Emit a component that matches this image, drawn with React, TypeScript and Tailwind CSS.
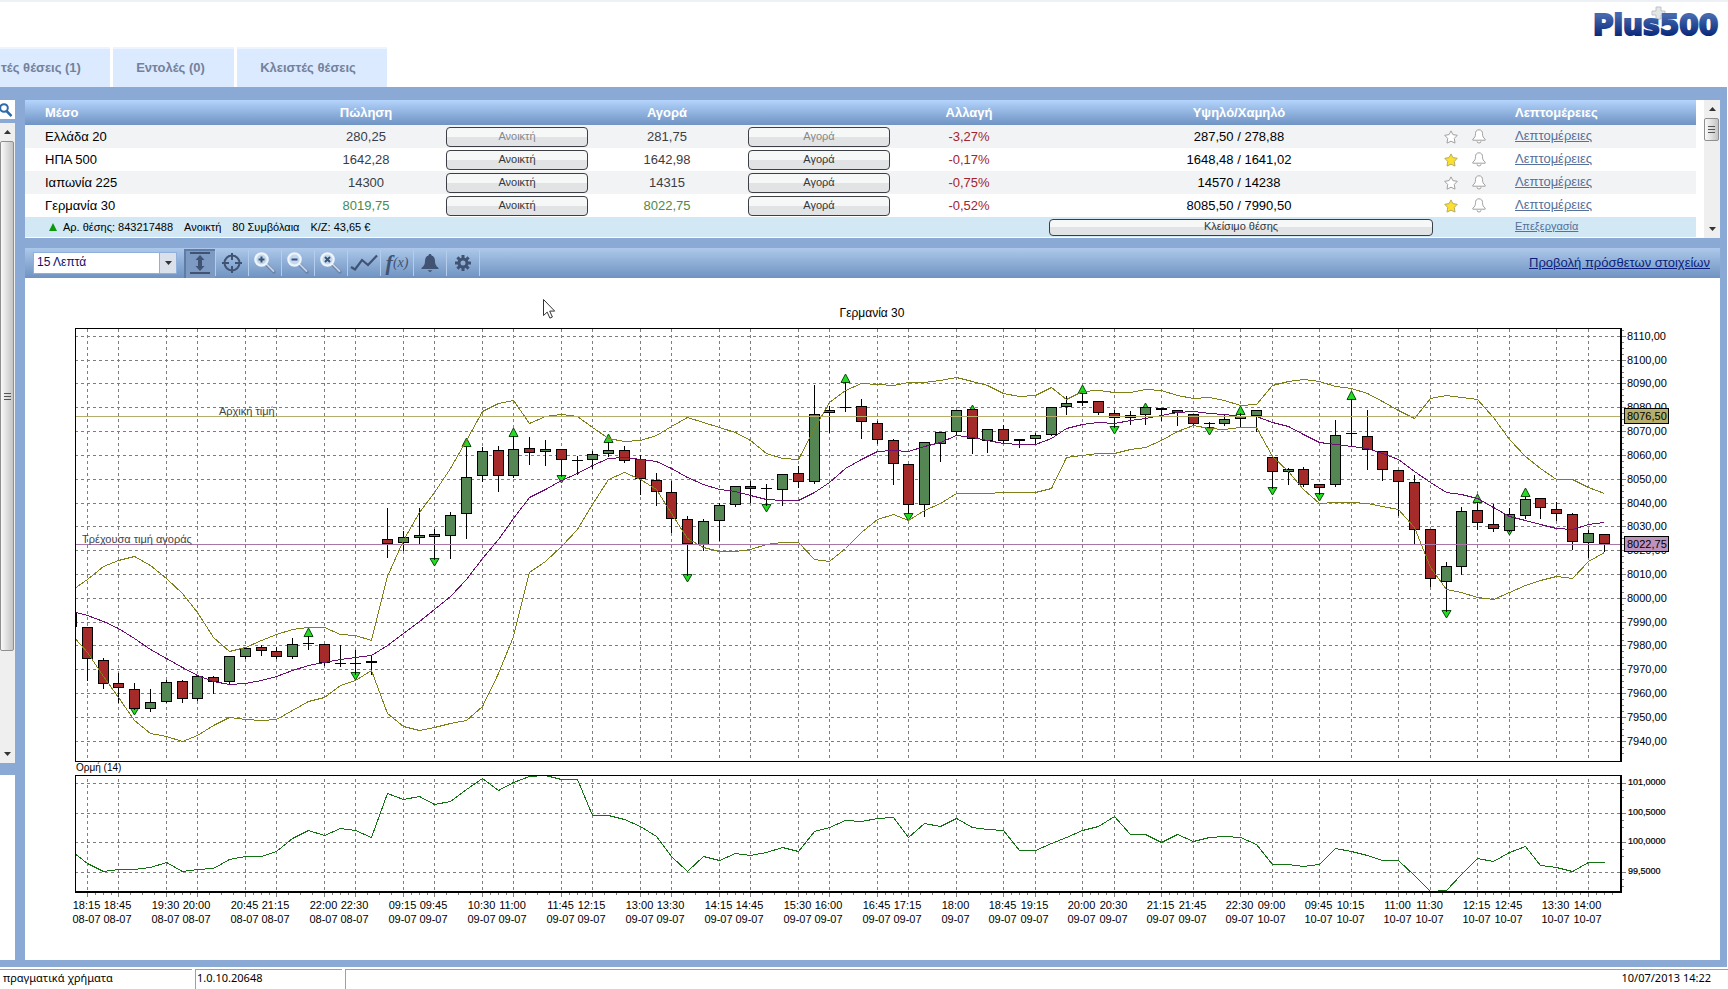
import { useState } from 'react';
import type { ReactNode } from 'react';
import { clsx } from 'clsx';

type Instrument = {
  name: string;
  sell: string;
  buy: string;
  change: string;
  range: string;
  starred?: boolean;
  closed?: boolean;
  up?: boolean;
};

const INSTRUMENTS: Instrument[] = [
  { name: 'Ελλάδα 20', sell: '280,25', buy: '281,75', change: '-3,27%', range: '287,50 / 278,88', closed: true },
  { name: 'ΗΠΑ 500', sell: '1642,28', buy: '1642,98', change: '-0,17%', range: '1648,48 / 1641,02', starred: true },
  { name: 'Ιαπωνία 225', sell: '14300', buy: '14315', change: '-0,75%', range: '14570 / 14238' },
  { name: 'Γερμανία 30', sell: '8019,75', buy: '8022,75', change: '-0,52%', range: '8085,50 / 7990,50', starred: true, up: true },
];

// direction, body top, body bottom, high, low ('d' = doji, 'b' = thick doji)
type Candle = ['r' | 'g' | 'd' | 'b', number, number, number, number];

const CANDLES: Candle[] = [
  ['r', 627, 658, 627, 680], ['r', 660, 683, 658, 688], ['r', 683, 687, 673, 702], ['r', 689, 708, 683, 709],
  ['g', 702, 708, 689, 711], ['g', 682, 701, 680, 702], ['r', 681, 698, 680, 702], ['g', 676, 698, 676, 700],
  ['r', 677, 681, 676, 693], ['g', 656, 681, 656, 684], ['g', 648, 656, 647, 658], ['r', 647, 650, 645, 655],
  ['r', 651, 656, 647, 658], ['g', 644, 656, 638, 658], ['d', 643, 643, 636, 649], ['r', 644, 662, 644, 665],
  ['d', 663, 663, 645, 666], ['d', 663, 663, 650, 674], ['b', 661, 662, 656, 674], ['r', 539, 543, 508, 557],
  ['g', 537, 542, 531, 550], ['g', 535, 537, 508, 544], ['g', 534, 536, 529, 559], ['g', 515, 535, 512, 558],
  ['g', 477, 513, 447, 538], ['g', 451, 475, 447, 481], ['r', 450, 475, 446, 491], ['g', 449, 475, 436, 477],
  ['r', 448, 452, 437, 464], ['g', 449, 451, 440, 465], ['r', 449, 459, 449, 476], ['d', 460, 460, 456, 474],
  ['g', 454, 459, 451, 468], ['g', 450, 453, 442, 456], ['r', 450, 460, 446, 462], ['r', 459, 478, 455, 494],
  ['r', 480, 491, 473, 505], ['r', 492, 518, 481, 532], ['r', 519, 543, 516, 575], ['g', 521, 544, 519, 550],
  ['g', 505, 520, 503, 540], ['g', 486, 504, 486, 506], ['r', 486, 488, 481, 502], ['d', 488, 488, 484, 505],
  ['g', 474, 489, 474, 505], ['r', 473, 481, 466, 487], ['g', 414, 481, 385, 483], ['g', 410, 412, 406, 432],
  ['d', 407, 407, 382, 411], ['r', 406, 421, 399, 438], ['r', 423, 439, 421, 443], ['r', 440, 463, 439, 484],
  ['r', 464, 504, 464, 513], ['g', 442, 504, 442, 516], ['g', 432, 443, 432, 461], ['g', 410, 431, 410, 435],
  ['r', 409, 438, 409, 453], ['g', 429, 440, 429, 452], ['r', 429, 440, 425, 443], ['b', 439, 440, 439, 447],
  ['g', 435, 438, 433, 443], ['g', 407, 434, 407, 435], ['g', 403, 406, 396, 414], ['b', 401, 402, 393, 405],
  ['r', 401, 412, 401, 414], ['r', 413, 417, 410, 427], ['g', 415, 417, 411, 424], ['g', 407, 414, 407, 424],
  ['b', 408, 409, 408, 420], ['r', 410, 412, 410, 425], ['r', 414, 423, 414, 424], ['d', 423, 423, 422, 427],
  ['g', 419, 423, 414, 425], ['g', 416, 418, 413, 427], ['g', 410, 415, 410, 431], ['r', 457, 471, 457, 488],
  ['g', 469, 471, 468, 484], ['r', 469, 484, 467, 486], ['r', 484, 487, 484, 494], ['g', 435, 484, 420, 486],
  ['d', 433, 433, 399, 446], ['r', 436, 449, 410, 469], ['r', 451, 469, 451, 480], ['r', 470, 481, 470, 515],
  ['r', 482, 529, 475, 544], ['r', 529, 578, 529, 586], ['g', 566, 581, 562, 611], ['g', 511, 566, 507, 574],
  ['r', 510, 522, 502, 529], ['r', 524, 528, 504, 531], ['g', 514, 530, 508, 531], ['g', 499, 515, 497, 518],
  ['r', 498, 507, 498, 518], ['r', 509, 513, 502, 520], ['r', 514, 541, 513, 549], ['g', 533, 542, 530, 557],
  ['r', 534, 543, 534, 551],
];

// fractal markers: candle index, y of the tip
const UP_MARKS = [[14, 628], [24, 438], [27, 428], [33, 434], [48, 374], [56, 405], [63, 385], [67, 403], [73, 406], [80, 391], [88, 494], [91, 488]];
const DOWN_MARKS = [[3, 715], [17, 680], [22, 566], [30, 483], [38, 582], [43, 512], [52, 521], [65, 434], [71, 435], [75, 495], [78, 501], [86, 618], [90, 535]];

// the first value of each series lies on the left frame, the rest on candles 0..96
const UPPER = [
  587, 579, 566, 560, 556, 565, 578, 593, 612, 637, 651, 647, 640, 634, 629, 627, 627, 634, 635, 640, 576, 540, 512, 492, 468,
  440, 411, 403, 400, 423, 416, 414, 416, 427, 438, 441, 440, 435, 426, 417, 422, 427, 432, 440, 453, 458, 459, 428, 402, 390,
  383, 384, 385, 382, 382, 380, 377, 381, 385, 393, 396, 395, 387, 399, 391, 390, 392, 392, 389, 390, 395, 398, 397, 400, 405,
  404, 385, 381, 379, 381, 386, 388, 393, 401, 410, 418, 398, 395, 397, 399, 417, 439, 456, 468, 479, 479, 487, 493,
];
const MIDDLE = [
  612, 615, 621, 628, 638, 649, 658, 667, 675, 681, 684, 683, 680, 676, 670, 665, 662, 659, 657, 655, 645, 633, 621, 609, 596,
  579, 558, 539, 518, 497, 489, 480, 473, 465, 458, 457, 459, 461, 468, 477, 484, 489, 491, 495, 499, 500, 500, 492, 482, 468,
  459, 451, 450, 451, 446, 442, 435, 437, 440, 443, 444, 444, 438, 428, 424, 422, 423, 420, 418, 415, 412, 411, 413, 414, 416,
  416, 422, 426, 434, 442, 444, 446, 448, 453, 459, 471, 482, 492, 494, 498, 507, 516, 520, 524, 528, 529, 524, 522,
];
const LOWER = [
  639, 652, 676, 697, 720, 733, 736, 741, 735, 725, 717, 719, 720, 719, 710, 701, 697, 685, 680, 670, 713, 726, 730, 727, 723,
  720, 706, 673, 636, 572, 561, 546, 529, 504, 479, 472, 479, 489, 513, 538, 547, 551, 551, 549, 544, 542, 542, 559, 561, 548,
  532, 519, 514, 520, 510, 503, 493, 493, 493, 492, 492, 492, 488, 457, 455, 453, 453, 449, 447, 440, 431, 425, 428, 429, 427,
  427, 456, 471, 489, 503, 502, 502, 503, 506, 509, 527, 567, 589, 592, 597, 599, 592, 585, 580, 576, 578, 561, 552,
];
const MOMENTUM = [
  854, 863, 871, 869, 869, 867, 862, 871, 869, 868, 859, 856, 856, 851, 838, 830, 835, 828, 830, 837, 793, 799, 796, 804, 801,
  789, 778, 790, 782, 776, 775, 779, 779, 815, 815, 819, 826, 836, 856, 871, 856, 860, 853, 855, 852, 847, 851, 831, 827, 820,
  821, 818, 817, 837, 823, 826, 818, 827, 829, 830, 850, 850, 843, 837, 830, 826, 816, 834, 834, 842, 834, 841, 837, 836, 837,
  844, 864, 864, 866, 864, 848, 851, 855, 860, 860, 875, 891, 890, 874, 858, 861, 852, 846, 865, 867, 871, 862, 862,
];

const TIMES: [number, string, string][] = [
  [0, '18:15', '08-07'], [2, '18:45', '08-07'], [5, '19:30', '08-07'], [7, '20:00', '08-07'], [10, '20:45', '08-07'],
  [12, '21:15', '08-07'], [15, '22:00', '08-07'], [17, '22:30', '08-07'], [20, '09:15', '09-07'], [22, '09:45', '09-07'],
  [25, '10:30', '09-07'], [27, '11:00', '09-07'], [30, '11:45', '09-07'], [32, '12:15', '09-07'], [35, '13:00', '09-07'],
  [37, '13:30', '09-07'], [40, '14:15', '09-07'], [42, '14:45', '09-07'], [45, '15:30', '09-07'], [47, '16:00', '09-07'],
  [50, '16:45', '09-07'], [52, '17:15', '09-07'], [55, '18:00', '09-07'], [58, '18:45', '09-07'], [60, '19:15', '09-07'],
  [63, '20:00', '09-07'], [65, '20:30', '09-07'], [68, '21:15', '09-07'], [70, '21:45', '09-07'], [73, '22:30', '09-07'],
  [75, '09:00', '10-07'], [78, '09:45', '10-07'], [80, '10:15', '10-07'], [83, '11:00', '10-07'], [85, '11:30', '10-07'],
  [88, '12:15', '10-07'], [90, '12:45', '10-07'], [93, '13:30', '10-07'], [95, '14:00', '10-07'],
];

const MOMENTUM_LEVELS: [string, number][] = [['101,0000', 783], ['100,5000', 813], ['100,0000', 842], ['99,5000', 872]];

const LEFT = 75;
const RIGHT = 1621;
const STEP = 15.8;
const candleX = (i: number) => Math.floor(87.3 + i * STEP) + 0.5;
const priceY = (v: number) => Math.floor(336.3 + (8110 - v) * 2.382) + 0.5;
const toPoints = (ys: number[]) => ys.map((y, i) => `${i === 0 ? LEFT + 1 : candleX(i - 1)},${y + 0.5}`).join(' ');

function CandleShape({ candle, x }: { candle: Candle; x: number }) {
  const [kind, top, bottom, high, low] = candle;
  return (
    <g stroke="#000">
      <line x1={x} x2={x} y1={high} y2={low + 1} />
      {kind === 'd' || kind === 'b' ? (
        <line x1={x - 5.5} x2={x + 5.5} y1={kind === 'd' ? top + 0.5 : top + 1} y2={kind === 'd' ? top + 0.5 : top + 1} strokeWidth={kind === 'd' ? 1 : 2} />
      ) : (
        <rect x={x - 5} y={top + 0.5} width={10} height={bottom - top} fill={kind === 'r' ? '#a52a2a' : '#548654'} />
      )}
    </g>
  );
}

function PriceChart() {
  const prices = Array.from({ length: 18 }, (_, i) => 8110 - i * 10);
  const minorPrices = Array.from({ length: 72 }, (_, i) => 8112.5 - i * 2.5);
  const minorTimes = TIMES.flatMap(([i], n) => {
    const next = n + 1 < TIMES.length ? TIMES[n + 1][0] : i + 2;
    return [0.25, 0.5, 0.75].map((f) => i + (next - i) * f);
  });

  return (
    <svg viewBox="25 278 1695 682" className="block w-full font-['Liberation_Sans',Arial,sans-serif] text-[11px]" role="img" aria-label="Γερμανία 30">
      <text x={872} y={317} textAnchor="middle" className="text-[12px]">Γερμανία 30</text>

      <g shapeRendering="crispEdges" fill="none">
        <g stroke="#7d7d7d" strokeDasharray="3 3">
          {prices.map((p) => <line key={p} x1={LEFT} x2={RIGHT} y1={priceY(p)} y2={priceY(p)} />)}
          {MOMENTUM_LEVELS.map(([label, y]) => <line key={label} x1={LEFT} x2={RIGHT} y1={y + 0.5} y2={y + 0.5} />)}
          {TIMES.map(([i]) => <path key={i} d={`M${candleX(i)} 329V761M${candleX(i)} 779V892`} />)}
        </g>
        <g stroke="#808080">
          {prices.map((p) => <line key={p} x1={RIGHT} x2={RIGHT + 5} y1={priceY(p)} y2={priceY(p)} />)}
          {minorPrices.map((p) => <line key={p} x1={RIGHT} x2={RIGHT + 3} y1={priceY(p)} y2={priceY(p)} />)}
          {MOMENTUM_LEVELS.map(([label, y]) => (
            <path key={label} d={`M${RIGHT} ${y + 0.5}h5M${RIGHT} ${y + 7.5}h3M${RIGHT} ${y + 14.5}h3`} />
          ))}
          {TIMES.map(([i]) => <line key={i} x1={candleX(i)} x2={candleX(i)} y1={892} y2={897} />)}
          {minorTimes.map((i) => <line key={i} x1={candleX(i)} x2={candleX(i)} y1={892} y2={895} />)}
        </g>

        {UP_MARKS.map(([i, y]) => (
          <path key={i} d={`M${candleX(i)} ${y}l4.5 8.5h-9z`} fill="#22dd22" stroke="#0a4a0a" shapeRendering="auto" />
        ))}
        {DOWN_MARKS.map(([i, y]) => (
          <path key={i} d={`M${candleX(i)} ${y}l4.5 -7.5h-9z`} fill="#22dd22" stroke="#0a4a0a" shapeRendering="auto" />
        ))}

        <rect x={75} y={612} width={2} height={15} fill="#000" />
        {CANDLES.map((c, i) => <CandleShape key={i} candle={c} x={candleX(i)} />)}

        <polyline points={toPoints(UPPER)} stroke="#80801a" />
        <polyline points={toPoints(LOWER)} stroke="#80801a" />
        <polyline points={toPoints(MIDDLE)} stroke="#6b0f72" />
        <polyline points={toPoints(MOMENTUM)} stroke="#147214" />

        <line x1={LEFT} x2={RIGHT} y1={416.5} y2={416.5} stroke="#b5ad6b" />
        <line x1={LEFT} x2={RIGHT} y1={544.5} y2={544.5} stroke="#a877a8" />

        <g stroke="#000">
          <path d={`M75.5 761.5V328.5H${RIGHT}M75 761.5H${RIGHT}`} />
          <path d={`M${RIGHT} 328V762`} strokeWidth={2} />
          <path d={`M75.5 892V775.5H${RIGHT}`} />
          <path d={`M75 892H${RIGHT}V775`} strokeWidth={2} />
        </g>
      </g>

      <text x={219} y={415} fill="#444">Αρχική τιμή</text>
      <text x={82} y={543} fill="#444">Τρέχουσα τιμή αγοράς</text>
      <text x={76} y={771} className="text-[10px]">Ορμή (14)</text>

      {prices.map((p) => <text key={p} x={1627} y={priceY(p) + 3}>{`${p},00`}</text>)}
      {MOMENTUM_LEVELS.map(([label, y]) => <text key={label} x={1628} y={y + 2} className="text-[9px]" stroke="#000" strokeWidth={0.2}>{label}</text>)}

      <g shapeRendering="crispEdges" stroke="#000">
        <rect x={1624.5} y={408.5} width={44} height={15} fill="#b5ad6b" />
        <rect x={1624.5} y={536.5} width={44} height={15} fill="#bc93bc" />
      </g>
      <text x={1627} y={420}>8076,50</text>
      <text x={1627} y={548}>8022,75</text>

      {TIMES.map(([i, time, date]) => (
        <g key={i} textAnchor="middle">
          <text x={candleX(i) - 1} y={909}>{time}</text>
          <text x={candleX(i) - 1} y={923}>{date}</text>
        </g>
      ))}

      <path d="M543.5 299.5v16l3.7-3.4 2.7 6 2.5-1.1-2.7-5.9h5z" fill="#fff" stroke="#333" />
    </svg>
  );
}

function Star({ on }: { on?: boolean }) {
  return (
    <svg width="14" height="14" viewBox="0 0 14 14" aria-hidden="true">
      <path d="M7 .9l1.900 3.700 4.400.7-3 3.100.7 4.700L7 11.200l-4 1.900.7-4.700-3-3.100 4.400-.7z" fill={on ? '#fbe02f' : '#fff'} stroke={on ? '#b9ab6a' : '#a0a0a0'} strokeLinejoin="round" />
    </svg>
  );
}

function AlertBell() {
  return (
    <svg width="14" height="15" viewBox="0 0 14 15" aria-hidden="true">
      <path d="M5 12.200a2 1.800 0 0 0 4 0" fill="#fff" stroke="#a0a0a0" />
      <path d="M7 .8c2.400 0 3.500 1.600 3.500 3.800 0 2.800.7 4 2.700 5.600v1H.8v-1c2-1.600 2.700-2.800 2.700-5.600C3.500 2.400 4.600.8 7 .8z" fill="#fff" stroke="#a0a0a0" />
    </svg>
  );
}

function TradeButton({ children, disabled, className }: { children: ReactNode; disabled?: boolean; className?: string }) {
  return (
    <button
      disabled={disabled}
      className={clsx(
        'block rounded-[4px] border border-[#3c3f46] bg-linear-to-b from-[#f6f7f7] from-50% to-[#e2e3e4] to-50% pb-px text-[11px] leading-none text-[#33363c] disabled:text-[#85878b]',
        className ?? 'mx-auto h-[20px] w-[142px]',
      )}
    >
      {children}
    </button>
  );
}

function Triangle({ down }: { down?: boolean }) {
  return (
    <svg width="7" height="4" viewBox="0 0 7 4" aria-hidden="true">
      <path d={down ? 'M0 0h7L3.500 4z' : 'M0 4h7L3.500 0z'} fill="#333" />
    </svg>
  );
}

function ScrollBar({ label, thumb, className }: { label: string; thumb: string; className?: string }) {
  return (
    <div className={clsx('flex flex-col bg-[#efefef]', className)}>
      <button aria-label={`${label} επάνω`} className="flex h-[18px] shrink-0 items-center justify-center"><Triangle /></button>
      <div className={clsx('mr-px flex flex-col items-center justify-center gap-[2px] rounded-[2px] border border-[#8f8f8f] bg-linear-to-r from-[#fafafa] to-[#c4c4c4]', thumb)}>
        <span className="h-px w-[7px] bg-[#555]" />
        <span className="h-px w-[7px] bg-[#555]" />
        <span className="h-px w-[7px] bg-[#555]" />
      </div>
      <button aria-label={`${label} κάτω`} className="mt-auto flex h-[18px] shrink-0 items-center justify-center"><Triangle down /></button>
    </div>
  );
}

function InstrumentTable() {
  return (
    <table className="w-full table-fixed border-collapse text-[13px]">
      <colgroup>
        <col className="w-[270px]" />
        <col className="w-[142px]" />
        <col className="w-[160px]" />
        <col className="w-[140px]" />
        <col className="w-[164px]" />
        <col className="w-[136px]" />
        <col className="w-[404px]" />
        <col className="w-[64px]" />
        <col className="w-[191px]" />
      </colgroup>
      <thead>
        <tr className="h-[25px] bg-linear-to-b from-[#b4d4fc] to-[#6f93c3] text-white">
          <th className="pl-[20px] text-left">Μέσο</th>
          <th>Πώληση</th>
          <th />
          <th>Αγορά</th>
          <th />
          <th>Αλλαγή</th>
          <th>Υψηλό/Χαμηλό</th>
          <th />
          <th className="pl-[10px] text-left">Λεπτομέρειες</th>
        </tr>
      </thead>
      <tbody>
        {INSTRUMENTS.map((row) => (
          <tr key={row.name} className="h-[23px] text-center odd:bg-[#f1f3f5] [&>td]:p-0">
            <td className="text-left"><span className="pl-[20px]">{row.name}</span></td>
            <td className={row.up ? 'text-[#4c8a4c]' : 'text-[#3a3d45]'}>{row.sell}</td>
            <td><TradeButton disabled={row.closed}>Ανοικτή</TradeButton></td>
            <td className={row.up ? 'text-[#4c8a4c]' : 'text-[#3a3d45]'}>{row.buy}</td>
            <td><TradeButton disabled={row.closed}>Αγορά</TradeButton></td>
            <td className="text-[#a3242c]">{row.change}</td>
            <td>{row.range}</td>
            <td>
              <div className="flex gap-[14px] pl-[3px]">
                <button aria-label={`Αγαπημένο ${row.name}`}><Star on={row.starred} /></button>
                <button aria-label={`Ειδοποίηση ${row.name}`}><AlertBell /></button>
              </div>
            </td>
            <td className="text-left"><a href="#details" className="block pb-[2px] pl-[10px] leading-[18px] text-[#55709a] underline">Λεπτομέρειες</a></td>
          </tr>
        ))}
        <tr className="h-[20px] bg-[#d3e8f5] text-[11px] [&>td]:p-0">
          <td colSpan={6}>
            <div className="flex items-center pl-[24px]">
              <svg width="8" height="8" viewBox="0 0 8 8" aria-hidden="true"><path d="M4 0l4 8H0z" fill="#0a9a0a" /></svg>
              <span className="ml-[6px]">Αρ. θέσης: 843217488</span>
              <span className="ml-[11px]">Ανοικτή</span>
              <span className="ml-[11px]">80 Συμβόλαια</span>
              <span className="ml-[11px]">Κ/Ζ: 43,65 €</span>
            </div>
          </td>
          <td><div className="pr-[8px] pl-[12px]"><TradeButton className="h-[17px] w-full">Κλείσιμο θέσης</TradeButton></div></td>
          <td />
          <td><a href="#edit" className="block pb-[2px] pl-[10px] text-[#55709a] underline">Επεξεργασία</a></td>
        </tr>
      </tbody>
    </table>
  );
}

function ZoomGlass({ sign }: { sign: string }) {
  return (
    <svg width="24" height="24" viewBox="0 0 24 24" fill="none" aria-hidden="true">
      <path d="M13.500 13.500l7.500 7.500" stroke="#6c84a8" strokeWidth="3.500" strokeLinecap="round" />
      <path d="M13.500 13l7 7" stroke="#c3d1e4" strokeWidth="1.800" strokeLinecap="round" />
      <circle cx="8.500" cy="8.500" r="6.200" fill="#c3d8f0" stroke="#eef4fb" strokeWidth="2.200" />
      <path d={sign} stroke="#3c5372" strokeWidth="2" />
    </svg>
  );
}

const INK = '#405373';

const TOOLS: { label: string; icon: ReactNode }[] = [
  {
    label: 'Στόχαστρο',
    icon: (
      <svg width="22" height="22" viewBox="0 0 22 22" fill="none" stroke={INK} strokeWidth="2" aria-hidden="true">
        <circle cx="11" cy="11" r="7.500" />
        <path d="M11 1v7M11 14v7M1 11h7M14 11h7" />
      </svg>
    ),
  },
  { label: 'Μεγέθυνση', icon: <ZoomGlass sign="M8.500 5.500v6M5.500 8.500h6" /> },
  { label: 'Σμίκρυνση', icon: <ZoomGlass sign="M5.500 8.500h6" /> },
  { label: 'Επαναφορά', icon: <ZoomGlass sign="M6 6l5 5M11 6l-5 5" /> },
  {
    label: 'Γραμμή',
    icon: (
      <svg width="28" height="18" viewBox="0 0 28 18" fill="none" stroke={INK} strokeWidth="2.200" aria-hidden="true">
        <path d="M1 13l4 2.500L12 6l6 5L27 1.500" />
      </svg>
    ),
  },
  {
    label: 'Δείκτες',
    icon: (
      <span className="flex items-center font-['Liberation_Serif',serif] text-[14px] leading-none text-[#405373] italic">
        <span className="text-[22px] leading-none font-bold">f</span>(x)
      </span>
    ),
  },
  {
    label: 'Ειδοποιήσεις',
    icon: (
      <svg width="18" height="20" viewBox="0 0 18 20" fill={INK} aria-hidden="true">
        <path d="M9 1c1 0 1.500.6 1.500 1.500C13 3.300 14 5.500 14 8c0 3.500 1 5 3.500 7v1H.5v-1C3 13 4 11.500 4 8c0-2.500 1-4.700 3.500-5.500C7.500 1.600 8 1 9 1zM6.500 17.300h5L9 19.300z" />
      </svg>
    ),
  },
  {
    label: 'Ρυθμίσεις',
    icon: (
      <svg width="16" height="16" viewBox="0 0 16 16" fill="none" stroke={INK} aria-hidden="true">
        <circle cx="8" cy="8" r="4" strokeWidth="3" />
        <path d="M8 0v3.500M8 12.500V16M0 8h3.500M12.500 8H16M2.400 2.400l2.400 2.400M11.200 11.200l2.400 2.400M13.600 2.400l-2.400 2.400M4.800 11.200l-2.400 2.400" strokeWidth="3" />
      </svg>
    ),
  },
];

function ChartToolbar() {
  const [period, setPeriod] = useState('15');
  return (
    <div className="flex h-[30px] items-center bg-linear-to-b from-[#adc8ea] to-[#6f93c1] pr-[10px] pl-[8px]">
      <label className="relative flex">
        <span className="sr-only">Περίοδος</span>
        <select value={period} onChange={(e) => setPeriod(e.target.value)} className="h-[22px] w-[144px] appearance-none border border-[#8fb0dc] bg-white pb-[2px] pl-[3px] text-[12px] leading-[18px] text-[#10106e]">
          <option value="15">15 Λεπτά</option>
          <option value="30">30 Λεπτά</option>
          <option value="60">1 Ώρα</option>
        </select>
        <span className="pointer-events-none absolute top-px right-px flex h-[20px] w-[17px] items-center justify-center border-l border-[#8fb0dc] bg-[#dbe1ea]">
          <Triangle down />
        </span>
      </label>
      <button aria-label="Κατακόρυφη κλίμακα" aria-pressed="true" className="ml-[7px] flex h-[29px] w-[31px] items-center justify-center border-t-2 border-l-2 border-[#5d7ca8] bg-[#7c9ac2] pr-[2px] pb-[2px]">
        <svg width="20" height="22" viewBox="0 0 20 22" fill={INK} aria-hidden="true">
          <path d="M0 0h20v2H0zM0 20h20v2H0zM10 3l4.500 5H12v6h2.500L10 19l-4.500-5H8V8H5.500z" />
        </svg>
      </button>
      <div className="flex">
        {TOOLS.map((tool) => (
          <button key={tool.label} aria-label={tool.label} className="flex h-[26px] w-[33px] items-center justify-center border-l border-[#b5cdec] pb-px">
            {tool.icon}
          </button>
        ))}
        <span className="h-[26px] w-px bg-[#b5cdec]" />
      </div>
      <a href="#more" className="ml-auto text-[13px] text-[#0a1f7c] underline">Προβολή πρόσθετων στοιχείων</a>
    </div>
  );
}

function Logo() {
  return (
    <svg width="134" height="40" viewBox="0 0 134 40" role="img" aria-label="Plus500">
      <defs>
        <linearGradient id="brand" x1="0" y1="0" x2="0" y2="1">
          <stop offset="0.200" stopColor="#4467ad" />
          <stop offset="0.800" stopColor="#0b2a7c" />
        </linearGradient>
      </defs>
      <path d="M64 3h5v4h4v4h-4v4h-5v-4h-4V7h4z" fill="#e3e5e6" stroke="#bfc3c7" strokeWidth="1" />
      <text x="1" y="31" fill="url(#brand)" stroke="url(#brand)" strokeWidth="2" className="font-['DejaVu_Sans',sans-serif] text-[28px] font-bold">Plus500</text>
    </svg>
  );
}

export default function App() {
  const tab = 'flex h-[40px] items-center justify-center border-t-2 border-[#ecf4ff] bg-[#dbeaff] pb-px text-[13px] font-bold text-[#74819b]';
  return (
    <div className="flex min-h-screen flex-col bg-white font-['Liberation_Sans',Arial,sans-serif] text-black">
      <header className="flex h-[87px] items-end justify-between border-t-2 border-[#edf1f6]">
        <nav className="flex gap-[3px]">
          <button className={clsx(tab, 'w-[110px] pr-[28px] whitespace-nowrap')}>τές θέσεις (1)</button>
          <button className={clsx(tab, 'w-[121px] pr-[6px]')}>Εντολές (0)</button>
          <button className={clsx(tab, 'w-[150px] pr-[8px]')}>Κλειστές θέσεις</button>
        </nav>
        <a href="#home" className="mr-[2px] self-start pt-[2px]"><Logo /></a>
      </header>

      <main className="flex flex-1 gap-[10px] border-r border-white bg-[#8aa9d5] pt-[13px] pr-[7px] pb-[7px]">
        <aside className="flex w-[15px] shrink-0 flex-col">
          <button aria-label="Αναζήτηση" className="mb-[4px] flex h-[19px] items-center bg-white">
            <svg width="12" height="14" viewBox="0 0 12 14" fill="none" stroke="#2c6aa8" strokeWidth="2" aria-hidden="true">
              <circle cx="4" cy="5" r="3.800" />
              <path d="M6.500 8l5 5" strokeWidth="2.500" />
            </svg>
          </button>
          <ScrollBar label="Κύλιση λίστας" className="mb-[12px] h-[640px]" thumb="h-[510px]" />
          <div className="flex-1 bg-white" />
        </aside>

        <div className="flex min-w-0 flex-1 flex-col">
          <section className="mb-[10px] flex h-[138px] bg-white">
            <div className="min-w-0 flex-1"><InstrumentTable /></div>
            <ScrollBar label="Κύλιση πίνακα" className="ml-[8px] w-[16px]" thumb="h-[23px]" />
          </section>
          <section className="flex flex-1 flex-col bg-white">
            <ChartToolbar />
            <PriceChart />
          </section>
        </div>
      </main>

      <footer className="mt-[2px] flex h-[20px] gap-[3px] font-['Noto_Sans',sans-serif] text-[11px] leading-[16px] [&>div]:border-t [&>div]:border-[#a0a0a0]">
        <div className="w-[192px] pl-[3px]">πραγματικά χρήματα</div>
        <div className="w-[147px] border-l pl-px">1.0.10.20648</div>
        <div className="flex-1 border-l pr-[17px] text-right">10/07/2013 14:22</div>
      </footer>
    </div>
  );
}
